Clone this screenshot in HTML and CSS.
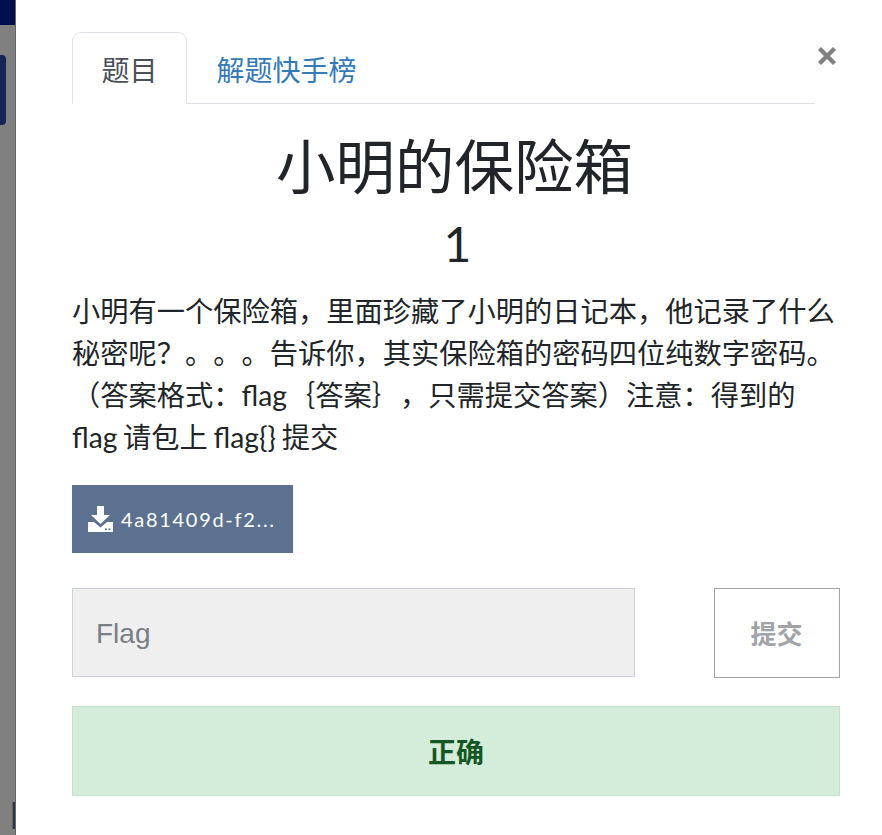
FILE: index.html
```html
<!DOCTYPE html>
<html lang="zh">
<head>
    <meta charset="UTF-8">
    <meta name="viewport" content="width=device-width, initial-scale=1.0">
    <title>小明的保险箱</title>
    <link rel="stylesheet" href="styles.css">
</head>
<body>
    <div class="backdrop">
        <div class="backdrop-nav"></div>
        <div class="backdrop-card"></div>
        <div class="backdrop-mark"></div>
    </div>
    <div class="modal">
        <div class="tab-row">
            <ul class="tabs">
                <li class="tab active">题目</li>
                <li class="tab link">解题快手榜</li>
            </ul>
            <button class="close" aria-label="Close">
                <svg width="20" height="20" viewBox="0 0 20 20"><path d="M2.500 2.500 17.500 17.500M17.500 2.500 2.500 17.500" stroke="#818181" stroke-width="4.400" fill="none"/></svg>
            </button>
        </div>
        <h1 class="title">小明的保险箱</h1>
        <h2 class="points">1</h2>
        <p class="description">小明有一个保险箱，里面珍藏了小明的日记本，他记录了什么秘密呢？。。。告诉你，其实保险箱的密码四位纯数字密码。（答案格式：flag｛答案｝，只需提交答案）注意：得到的 flag 请包上 flag{} 提交</p>
        <a class="file-btn">
            <svg width="25" height="26" viewBox="0 0 25 26"><path d="M9 0h7v9h6l-9.500 9L3 9h6z" fill="#fff"/><path d="M0 16h6l6.500 5.500L19 16h6v10H0z" fill="#fff"/><rect x="17" y="22.500" width="2" height="1.500" fill="#5c718f"/><rect x="20.500" y="22.500" width="2" height="1.500" fill="#5c718f"/></svg>
            <span>4a81409d-f2...</span>
        </a>
        <div class="submit-row">
            <input class="flag-input" type="text" placeholder="Flag">
            <button class="submit-btn">提交</button>
        </div>
        <div class="result">正确</div>
    </div>
</body>
</html>
```

FILE: styles.css
```css
* {
    margin: 0;
    padding: 0;
    box-sizing: border-box;
}
html, body {
    height: 100%;
}
body {
    display: flex;
    height: 835px;
    overflow: hidden;
    background: white;
    font-family: 'Lato', 'Noto Sans CJK SC', sans-serif;
    font-size: 28px;
    line-height: 1.5;
    color: #212529;
    text-spacing-trim: space-all;
}
.backdrop {
    width: 16px;
    flex-shrink: 0;
    background: #808080;
    border-right: 1px solid #666;
}
.backdrop-nav {
    height: 25px;
    background: #00104a;
}
.backdrop-card {
    width: 6px;
    height: 70px;
    margin-top: 30px;
    background: #1a2358;
    border-radius: 0 4px 4px 0;
}
.backdrop-mark {
    width: 3px;
    height: 27px;
    margin: 677px 0 0 12px;
    background: #1d3a5c;
    border-left: 1px solid #8a5a2a;
}
.modal {
    flex: 1;
    padding: 32px 42px 0 56px;
}
.tab-row {
    display: flex;
    align-items: flex-start;
}
.tabs {
    width: 743px;
    height: 72px;
    display: flex;
    list-style: none;
    border-bottom: 1px solid #dee2e6;
}
.tab {
    height: 72px;
    padding: 0 28.500px;
    line-height: 74px;
    border: 1px solid transparent;
}
.tab.active {
    color: #495057;
    background: white;
    border-color: #dee2e6 #dee2e6 white;
    border-radius: 9px 9px 0 0;
}
.tab.link {
    color: #337ab7;
}
.close {
    margin: 14px 0 0 2px;
    width: 20px;
    height: 20px;
    border: none;
    background: none;
}
.title {
    margin-top: 26px;
    padding-right: 3px;
    font-size: 59.500px;
    font-weight: 400;
    line-height: 72px;
    text-align: center;
}
.points {
    margin-top: 13px;
    padding-left: 3px;
    font-size: 48px;
    font-weight: 400;
    line-height: 58px;
    text-align: center;
}
.description {
    margin-top: 17px;
    font-size: 28.250px;
    line-height: 42px;
    word-spacing: -1.500px;
}
.file-btn {
    display: flex;
    align-items: center;
    gap: 8px;
    width: 221px;
    height: 68px;
    margin-top: 27px;
    padding-left: 16px;
    background: #5c718f;
    color: white;
    font-size: 20px;
    letter-spacing: 1.700px;
}
.submit-row {
    display: flex;
    justify-content: space-between;
    margin-top: 35px;
}
.flag-input {
    width: 563px;
    height: 89px;
    padding: 2px 23px 0;
    background: #efefef;
    border: 1px solid #ced4da;
    font-family: 'Liberation Sans', sans-serif;
    font-size: 28px;
}
.flag-input::placeholder {
    color: #7a7f85;
}
.submit-btn {
    width: 126px;
    height: 90px;
    padding: 0 1px 2px 0;
    background: white;
    border: 1px solid #a0a4a9;
    color: #a0a4a9;
    font-family: 'Lato', 'Noto Sans CJK SC', sans-serif;
    font-size: 26px;
    font-weight: 700;
}
.result {
    height: 90px;
    margin-top: 28px;
    background: #d4edda;
    border: 1px solid #c3e6cb;
    color: #155724;
    font-weight: 700;
    line-height: 90px;
    text-align: center;
}
```
